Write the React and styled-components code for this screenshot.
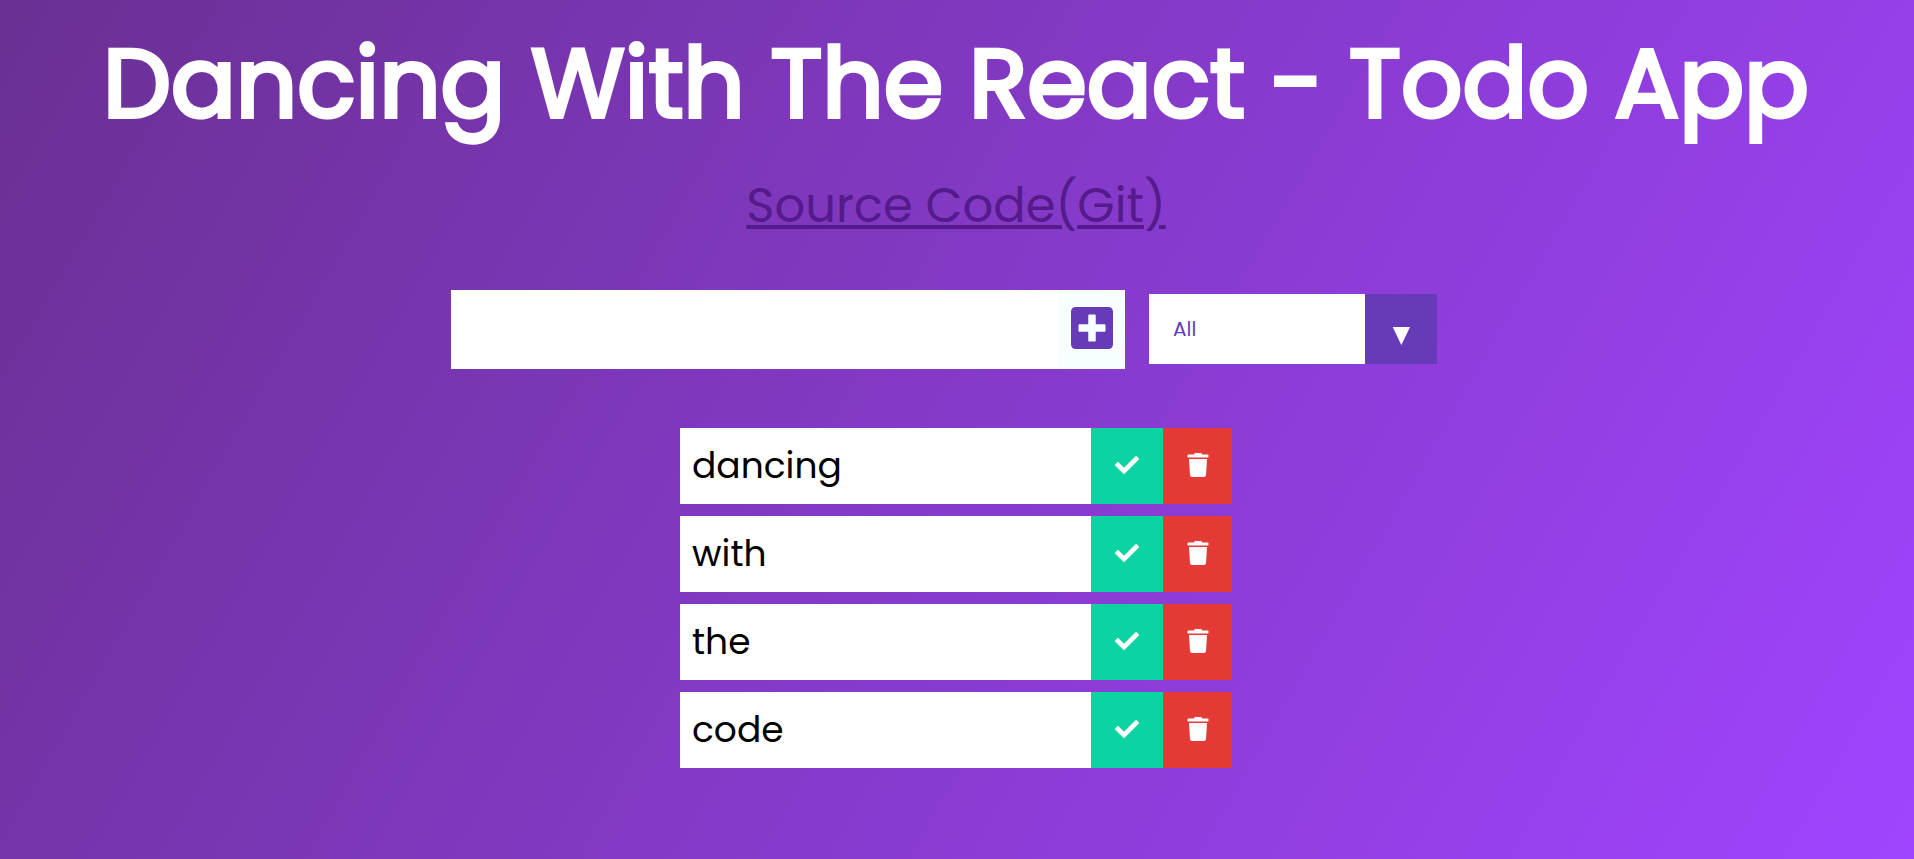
import React, { useState } from "react";
import styled, { createGlobalStyle } from "styled-components";
import { FaCheck, FaPlusSquare, FaTrash } from "react-icons/fa";

const GlobalStyle = createGlobalStyle`
  * { margin: 0; padding: 0; box-sizing: border-box; }
  body {
    min-height: 100vh;
    overflow: hidden;
    color: white;
    background-image: linear-gradient(120deg, #6a3093, #a044ff);
    font-family: Poppins, Inter, "Liberation Sans", sans-serif;
  }
`;

const Header = styled.header`
  display: flex;
  flex-direction: column;
  align-items: center;
  height: 242px;
  padding-right: 2px;
`;

const Title = styled.h1`
  height: 160px;
  padding-top: 12px;
  font-size: 96px;
  font-weight: 400;
  line-height: 144px;
  white-space: nowrap;
  -webkit-text-stroke: 4px white;
`;

const SourceLink = styled.a`
  height: 82px;
  padding-top: 10px;
  color: #551a8b;
  font-size: 48px;
  line-height: 72px;
  text-decoration: underline;
  text-decoration-thickness: 4px;
  text-underline-offset: 3px;
  white-space: nowrap;
`;

const Form = styled.form`
  display: flex;
  align-items: flex-start;
  gap: 24px;
  height: 79px;
  margin: 48px 0 0 451px;
`;

const Field = styled.div`
  display: flex;
  width: 674px;
  height: 79px;
`;

const TodoInput = styled.input`
  flex: 1;
  min-width: 0;
  padding: 8px 16px;
  border: none;
  outline: none;
  background: white;
  font: inherit;
  font-size: 36px;
`;

const AddButton = styled.button`
  display: flex;
  flex: none;
  align-items: center;
  justify-content: center;
  width: 66px;
  padding-bottom: 3px;
  border: none;
  background: #f7fffe;
  color: #673ab7;
  font-size: 48px;
`;

const Filter = styled.div`
  display: flex;
  width: 288px;
  height: 70px;
  margin-top: 4px;
`;

const FilterValue = styled.div`
  flex: 1;
  padding-left: 24px;
  background: white;
  color: #673ab7;
  font-size: 20px;
  line-height: 71px;
`;

const FilterArrow = styled.div`
  display: flex;
  justify-content: center;
  width: 72px;
  padding-top: 33px;
  background: #673ab7;
`;

const TodoList = styled.ul`
  display: flex;
  flex-direction: column;
  gap: 12px;
  width: 552px;
  margin: 59px 0 0 680px;
  list-style: none;
`;

const Todo = styled.li`
  display: flex;
  height: 76px;
  background: white;
  color: black;
`;

const TodoText = styled.span`
  flex: 1;
  padding-left: 12px;
  font-size: 36px;
  line-height: 76px;
`;

const ActionButton = styled.button`
  display: flex;
  align-items: center;
  justify-content: center;
  width: ${(p) => p.$width}px;
  padding-bottom: 2px;
  border: none;
  background: ${(p) => p.$color};
  color: white;
  font-size: 24px;
`;

const todos = ["dancing", "with", "the", "code"];

export default function App() {
  const [value, setValue] = useState("");
  return (
    <>
      <GlobalStyle />
      <Header>
        <Title>Dancing With The React - Todo App</Title>
        <SourceLink href="#">Source Code(Git)</SourceLink>
      </Header>
      <Form onSubmit={(e) => e.preventDefault()}>
        <Field>
          <TodoInput value={value} onChange={(e) => setValue(e.target.value)} />
          <AddButton type="submit"><FaPlusSquare /></AddButton>
        </Field>
        <Filter>
          <FilterValue>All</FilterValue>
          <FilterArrow>
            <svg width="18" height="18" viewBox="0 0 18 18">
              <path d="M0.7 0H18L9.35 18Z" fill="white" />
            </svg>
          </FilterArrow>
        </Filter>
      </Form>
      <TodoList>
        {todos.map((text) => (
          <Todo key={text}>
            <TodoText>{text}</TodoText>
            <ActionButton $width={72} $color="#0bd4a2"><FaCheck /></ActionButton>
            <ActionButton $width={69} $color="#e53935"><FaTrash /></ActionButton>
          </Todo>
        ))}
      </TodoList>
    </>
  );
}
